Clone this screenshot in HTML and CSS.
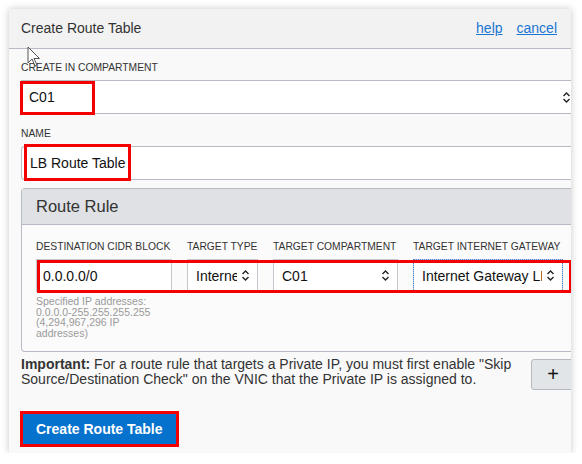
FILE: index.html
```html
<!DOCTYPE html>
<html>
<head>
<meta charset="utf-8">
<link rel="stylesheet" href="styles.css">
</head>
<body>
<div class="panel">
  <div class="header">
    <span class="title">Create Route Table</span>
    <div class="links"><a href="#">help</a><a href="#">cancel</a></div>
  </div>
  <div class="content">
    <div class="label label-first">CREATE IN COMPARTMENT</div>
    <div class="select wide">
      <span class="val">C01</span>
      <svg class="chev" width="9" height="13" viewBox="0 0 9 13"><path d="M1.5 5 L4.5 2 L7.5 5 M1.5 8 L4.5 11 L7.5 8" fill="none" stroke="#222" stroke-width="1.4"/></svg>
      <span class="mark mark-comp"></span>
    </div>
    <div class="label label-name">NAME</div>
    <div class="textinput">
      <span class="val">LB Route Table</span>
      <span class="mark mark-name"></span>
    </div>
    <div class="rulebox">
      <div class="rulehead">Route Rule</div>
      <div class="rulebody">
        <div class="grid labels">
          <div class="label">DESTINATION CIDR BLOCK</div>
          <div class="label">TARGET TYPE</div>
          <div class="label">TARGET COMPARTMENT</div>
          <div class="label">TARGET INTERNET GATEWAY</div>
        </div>
        <div class="grid fields">
          <div class="field"><span class="val">0.0.0.0/0</span></div>
          <div class="field sel"><span class="val">Internet Gateway</span><svg class="chev" width="9" height="13" viewBox="0 0 9 13"><path d="M1.5 5 L4.5 2 L7.5 5 M1.5 8 L4.5 11 L7.5 8" fill="none" stroke="#222" stroke-width="1.4"/></svg></div>
          <div class="field sel"><span class="val">C01</span><svg class="chev" width="9" height="13" viewBox="0 0 9 13"><path d="M1.5 5 L4.5 2 L7.5 5 M1.5 8 L4.5 11 L7.5 8" fill="none" stroke="#222" stroke-width="1.4"/></svg></div>
          <div class="field sel focus"><span class="val">Internet Gateway LB</span><svg class="chev" width="9" height="13" viewBox="0 0 9 13"><path d="M1.5 5 L4.5 2 L7.5 5 M1.5 8 L4.5 11 L7.5 8" fill="none" stroke="#222" stroke-width="1.4"/></svg></div>
          <span class="mark mark-row"></span>
        </div>
        <div class="help">Specified IP addresses: 0.0.0.0-255.255.255.255 (4,294,967,296 IP addresses)</div>
      </div>
    </div>
    <div class="footrow">
      <p class="note"><b>Important:</b> For a route rule that targets a Private IP, you must first enable "Skip Source/Destination Check" on the VNIC that the Private IP is assigned to.</p>
      <button class="plus">+</button>
    </div>
    <div class="btnwrap">
      <button class="primary">Create Route Table</button>
      <span class="mark mark-btn"></span>
    </div>
  </div>
  <svg class="cursor" width="14" height="22" viewBox="0 0 14 22"><path d="M1 1 L1 17 L5 13 L8 20 L10 19 L7 12.5 L12.5 12.5 Z" fill="#fff" fill-opacity="0.6" stroke="#555" stroke-width="1"/></svg>
</div>
</body>
</html>
```
FILE: styles.css
```css
* { box-sizing: border-box; }
body {
  margin: 0;
  background: #ffffff;
  font-family: "Liberation Sans", Arial, sans-serif;
  color: #333;
}
.panel {
  position: relative;
  margin: 9px 0 0 9px;
  width: 562px;
  height: 444px;
  background: #f9f9f9;
  box-shadow: 0 0 7px rgba(0,0,0,0.22);
  overflow: hidden;
}
.header {
  height: 40px;
  background: #f2f2f2;
  border-bottom: 1px solid #b7bcc4;
  display: flex;
  align-items: center;
  justify-content: space-between;
  padding: 0 14px 1px 12px;
}
.title { font-size: 14px; color: #333; }
.links { display: flex; gap: 14px; }
.links a { font-size: 14px; color: #1a76d2; text-decoration: underline; }
.content { padding-left: 12px; }
.label {
  font-size: 10.3px;
  line-height: 12px;
  color: #333;
  white-space: nowrap;
  text-transform: uppercase;
}
.label-first { margin-top: 13px; }
.label-name { margin-top: 14px; }
.select, .textinput {
  position: relative;
  margin-top: 6px;
  height: 34px;
  background: #fff;
  display: flex;
  align-items: center;
  padding-left: 8px;
  font-size: 14px;
  color: #111;
}
.select.wide {
  width: 550px;
  border-top: 1px solid #b7bcc4;
  border-bottom: 1px solid #b7bcc4;
  justify-content: space-between;
}
.textinput {
  width: 600px;
  border: 1px solid #b7bcc4;
  border-right: none;
  border-radius: 4px 0 0 4px;
}
.mark {
  position: absolute;
  border: 3px solid #f40000;
}
.mark-comp { left: -1px; top: 0px; width: 75px; height: 34px; }
.mark-name { left: 2px; top: -3px; width: 107px; height: 37px; }
.rulebox {
  margin-top: 8px;
  width: 600px;
  border: 1px solid #b7bcc4;
  border-right: none;
  border-radius: 4px 0 0 4px;
  background: #fbfbfb;
}
.rulehead {
  height: 36px;
  background: #dfe1e4;
  border-bottom: 1px solid #b7bcc4;
  font-size: 16.5px;
  color: #333;
  display: flex;
  align-items: center;
  padding-left: 14px;
}
.rulebody { padding: 16px 0 13px 14px; }
.grid {
  display: grid;
  grid-template-columns: 136px 71px 125px 150px;
  column-gap: 15px;
}
.fields {
  position: relative;
  margin-top: 6px;
  height: 33px;
}
.field {
  background: #fff;
  border: 1px solid #c4c8ce;
  display: flex;
  align-items: center;
  padding: 0 7px 0 6px;
  font-size: 14px;
  color: #111;
  overflow: hidden;
}
.field .val { white-space: nowrap; overflow: hidden; flex: 1; }
.field.sel { padding-left: 8px; gap: 4px; }
.field.focus { outline: 1px dotted #3d8fe0; outline-offset: -1px; }
.chev { flex: none; }
.mark-row { left: 1px; top: 1px; width: 535px; height: 33px; }
.help {
  margin-top: 4px;
  width: 136px;
  font-size: 10.5px;
  line-height: 10.5px;
  color: #9a9a9a;
}
.footrow {
  display: flex;
  align-items: flex-start;
  margin-top: 5px;
}
.note {
  margin: 0;
  width: 500px;
  flex: none;
  font-size: 14px;
  line-height: 15px;
  color: #333;
}
.plus {
  margin: 2px 0 0 10px;
  width: 44px;
  height: 31px;
  flex: none;
  background: #e2e5e8;
  border: 1px solid #b5bac1;
  border-radius: 3px;
  font-family: "Liberation Sans", Arial, sans-serif;
  font-size: 20px;
  color: #111;
  padding: 0;
}
.btnwrap {
  position: relative;
  display: inline-block;
  margin: 24px 0 0 2px;
}
.primary {
  display: block;
  height: 30px;
  padding: 0 13px;
  background: #0572ce;
  border: none;
  color: #fff;
  font-family: "Liberation Sans", Arial, sans-serif;
  font-weight: bold;
  font-size: 14px;
}
.mark-btn { left: -3px; top: -3px; right: -3px; bottom: -3px; }
.cursor { position: absolute; left: 18px; top: 37px; }
```
